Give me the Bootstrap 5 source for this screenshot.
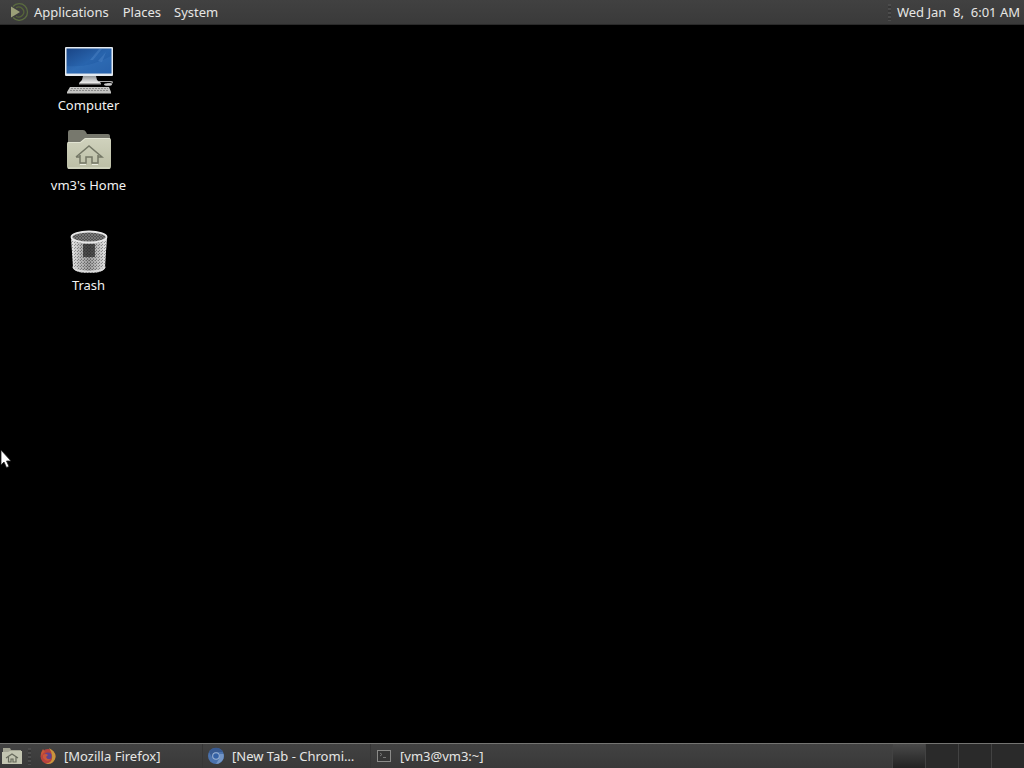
<!DOCTYPE html>
<html lang="en">
<head>
<meta charset="utf-8">
<meta name="viewport" content="width=device-width, initial-scale=1">
<title>Desktop</title>
<link href="https://cdn.jsdelivr.net/npm/bootstrap@5.3.0/dist/css/bootstrap.min.css" rel="stylesheet">
<style>
  body { font-family: "Noto Sans", sans-serif; font-size: 13px; line-height: 20px; background: #000; color: #e6e6e4; cursor: default; }
  .panel { background: #3c3c3c; }
  .panel-top { height: 25px; border-bottom: 1px solid #2a2a2a; background: linear-gradient(#414141, #3a3a3a); }
  .panel-bottom { height: 25px; border-top: 1px solid #747472; background: linear-gradient(#424242, #393939); }
  .panel .btn { --bs-btn-color: #e6e6e4; --bs-btn-hover-color: #e6e6e4; --bs-btn-active-color: #fff; font-size: 13px; line-height: 20px; border: 0; border-radius: 0; }
  .menu-btn { padding: 2px 7px; }
  .menu-btn + .menu-btn { padding: 2px 6px 2px 7px; }
  .task { width: 168px; padding: 2px 6px; gap: 7px; }
  .task + .task { box-shadow: -1px 0 #363636; }
  .grip { width: 3px; height: 17px; background: repeating-linear-gradient(#4c4c4c 0 2px, #363636 2px 4px); }
  .clock { white-space: pre; padding: 0 4px 0 6px; }
  .workspaces { width: 132px; }
  .workspaces .btn { background: #2a2a2a; border-left: 1px solid #424242; }
  .workspaces .btn.active { background: linear-gradient(#494949, #222); }
  .desk-icons { width: 177px; padding-top: 21px; }
  .desk-item { color: #f2f2f2; height: 80px; }
  .desk-item:hover { color: #fff; }
  .desk-item svg { margin-bottom: 1px; }
  .pointer { left: 0; top: 449px; }
</style>
</head>
<body class="d-flex flex-column vh-100 overflow-hidden">
<header class="panel panel-top d-flex align-items-center flex-shrink-0">
  <nav class="d-flex align-items-center" aria-label="Main menu">
    <button type="button" class="btn menu-btn d-flex align-items-center gap-1">
      <svg width="23" height="20" viewBox="0 0 23 20" fill="none" aria-hidden="true">
        <path d="M6 4.500A8.300 8.300 0 1 1 6 15.500" stroke="#5b6c40" stroke-width="1.300"/>
        <path d="M9 5.800A5 5 0 1 1 9 14.200" stroke="#566539" stroke-width="1.300"/>
        <path d="M4 4.500 13 10 4 15.500Z" fill="#9ba078"/>
      </svg>Applications</button>
    <button type="button" class="btn menu-btn">Places</button>
    <button type="button" class="btn menu-btn">System</button>
  </nav>
  <div class="d-flex align-items-center ms-auto">
    <span class="grip"></span>
    <button type="button" class="btn clock">Wed Jan  8,  6:01 AM</button>
  </div>
</header>

<main class="flex-grow-1">
  <div class="desk-icons d-flex flex-column">
    <a href="#" class="desk-item d-flex flex-column align-items-center text-decoration-none">
      <svg width="48" height="48" viewBox="0 0 48 48" aria-hidden="true">
        <defs>
          <linearGradient id="screen" x2="1" y2="1"><stop stop-color="#1a4586"/><stop offset=".5" stop-color="#2864ad"/><stop offset="1" stop-color="#1f58a2"/></linearGradient>
          <linearGradient id="stand" x2="0" y2="1"><stop stop-color="#8f9396"/><stop offset="1" stop-color="#eee"/></linearGradient>
        </defs>
        <rect x="0" y="1" width="48" height="29" rx="1" fill="#e4eaf0"/>
        <rect x="1.500" y="2.500" width="45" height="25" fill="url(#screen)"/>
        <path d="M2 20Q25 22 46 10V27.500H2Z" fill="#4b8bd0" opacity=".2"/>
        <path d="M25 14 34 3h3L28 14ZM33 15l8-9-4 10Z" fill="#6fa5df" opacity=".25"/>
        <path d="M18 30h13l1 4 4 3H14l3-3Z" fill="url(#stand)"/>
        <path d="M14 37h22v1.500H14Z" fill="#a6a6a6"/>
        <path d="M34 35.500h12q2 0 1 1.500l-5 1" fill="none" stroke="#aaa" stroke-width="1.200"/>
        <ellipse cx="43" cy="38.500" rx="4" ry="1.300" fill="#ccc"/>
        <path d="M5 41h39l2 5v1.500H2V46Z" fill="#c4c4c2"/>
        <path d="M6 42.500h37M5 44.500h39" stroke="#8b8b8b" stroke-width="1" stroke-dasharray="2 1"/>
      </svg>Computer</a>
    <a href="#" class="desk-item d-flex flex-column align-items-center text-decoration-none">
      <svg width="48" height="48" viewBox="0 0 48 48" aria-hidden="true">
        <defs><linearGradient id="folder" x2="0" y2="1"><stop stop-color="#d0d2bd"/><stop offset="1" stop-color="#bbbea5"/></linearGradient></defs>
        <path d="M3 6q0-2 2-2h13q2 0 3 2l1 2h21q2 0 2 2v12H3Z" fill="#77786d"/>
        <path d="M3 16h12l5-4h24q2 0 2 2v26q0 3-2 3H4q-2 0-2-3V18q0-2 1-2Z" fill="url(#folder)"/>
        <path d="M3 16.500h12.500l5-4H45M3 42h42" fill="none" stroke="#e2e4d3" stroke-width="1"/>
        <path d="M11 31 24 20 37 31h-3.500M11 31h3.500M15 29v8h6v-6h6v6h6v-8" fill="none" stroke="#747766" stroke-width="1.500"/>
        <path d="M15 38.500h6M27 38.500h6" stroke="#eceee0"/>
      </svg>vm3's Home</a>
    <a href="#" class="desk-item d-flex flex-column align-items-center text-decoration-none mt-3 pt-1">
      <svg width="48" height="48" viewBox="0 0 48 48" aria-hidden="true">
        <defs>
          <linearGradient id="metal"><stop stop-color="#eee"/><stop offset=".25" stop-color="#aaa"/><stop offset=".5" stop-color="#777"/><stop offset=".8" stop-color="#bbb"/><stop offset="1" stop-color="#eee"/></linearGradient>
          <pattern id="mesh" width="3" height="3" patternUnits="userSpaceOnUse"><path d="M0 0 3 3M3 0 0 3" stroke="#ddd" stroke-width=".6"/><path d="M1.500 0v1M0 1.500h1" stroke="#444" stroke-width=".8"/></pattern>
        </defs>
        <path d="M6 10 8 41q1 6 16 6t16-6l2-31Z" fill="url(#metal)"/>
        <path d="M6 10 8 41q1 6 16 6t16-6l2-31Z" fill="url(#mesh)" opacity=".6"/>
        <rect x="18" y="18" width="12" height="13" fill="#222" opacity=".7"/>
        <ellipse cx="24" cy="11" rx="17.500" ry="5.500" fill="#555"/>
        <ellipse cx="24" cy="11" rx="17.500" ry="5.500" fill="url(#mesh)" fill-opacity=".4" stroke="#e8e8e8" stroke-width="1.800"/>
        <path d="M8 40.500q1 5 16 5t16-5" fill="none" stroke="#ddd" stroke-width="1.500"/>
      </svg>Trash</a>
  </div>
</main>

<footer class="panel panel-bottom d-flex align-items-center flex-shrink-0">
  <button type="button" class="btn p-0 lh-1" aria-label="Show desktop">
    <svg class="d-block" width="24" height="20" viewBox="-3 0 24 20" aria-hidden="true">
      <path d="M0 2h7l1 2h10v4H0Z" fill="#a4a594"/>
      <path d="M-1 6h6l2-1h12v13H-1Z" fill="#c3c5b1"/>
      <path d="m3 12 6-4 6 4M5.500 11v5H8v-3h2v3h3v-5" fill="none" stroke="#66695b" stroke-width="1.200"/>
    </svg>
  </button>
  <span class="grip ms-1 me-1"></span>
  <nav class="d-flex" aria-label="Open windows">
    <button type="button" class="btn task ps-1 d-flex align-items-center text-start">
      <svg class="flex-shrink-0" width="18" height="18" viewBox="0 0 18 18" aria-hidden="true">
        <circle cx="9" cy="9.500" r="7.500" fill="#b8433e"/>
        <path d="M10 1q6 3 6.500 8a7.500 7.500 0 0 1-10 7.500Q14 16 13 9q0-4-3-8Z" fill="#c8963d"/>
        <path d="M2 6 4 2l2 3Q3 6 3 10Z" fill="#c95a38"/>
        <circle cx="9" cy="9" r="3.600" fill="#60458f"/>
        <path d="M4 8q3-2 5 0l-2 2q1 3 5 2-4 4-8-1Z" fill="#c9583b"/>
      </svg><span>[Mozilla Firefox]</span></button>
    <button type="button" class="btn task ps-1 d-flex align-items-center text-start">
      <svg class="flex-shrink-0" width="18" height="18" viewBox="0 0 18 18" aria-hidden="true">
        <circle cx="9" cy="9" r="8" fill="#4b72ad"/>
        <path d="M2 5a8 8 0 0 1 14 0H9a4 4 0 0 0-4 5Z" fill="#385a91"/>
        <path d="M13 7h3.500A8 8 0 0 1 9 17l3-5Z" fill="#7395c5"/>
        <circle cx="9" cy="9" r="3.800" fill="#9cb2d2"/>
        <circle cx="9" cy="9" r="2.800" fill="#3461a5"/>
      </svg><span class="text-nowrap">[New Tab - Chromi…</span></button>
    <button type="button" class="btn task ps-1 d-flex align-items-center text-start">
      <svg class="flex-shrink-0" width="18" height="18" viewBox="0 0 18 18" aria-hidden="true">
        <rect x="2.500" y="3.500" width="13" height="11" fill="#353535" stroke="#8b8b89"/>
        <path d="m5 6 2 1.500L5 9M8 10.500h3" fill="none" stroke="#777"/>
      </svg><span>[vm3@vm3:~]</span></button>
  </nav>
  <div class="workspaces d-flex align-self-stretch ms-auto" role="group" aria-label="Workspaces">
    <button type="button" class="btn flex-fill p-0 active" aria-label="Workspace 1"></button>
    <button type="button" class="btn flex-fill p-0" aria-label="Workspace 2"></button>
    <button type="button" class="btn flex-fill p-0" aria-label="Workspace 3"></button>
    <button type="button" class="btn flex-fill p-0" aria-label="Workspace 4"></button>
  </div>
</footer>

<!-- Mouse pointer, floating over the desktop -->
<svg class="pointer position-absolute pe-none" width="12" height="20" viewBox="0 0 12 20" aria-hidden="true">
  <path d="M1 1v15l3-3 2.500 5.500 2.500-1L6.500 12H11Z" fill="#fff" stroke="#222" stroke-width=".8"/>
</svg>
<script src="https://cdn.jsdelivr.net/npm/bootstrap@5.3.0/dist/js/bootstrap.bundle.min.js"></script>
</body>
</html>
